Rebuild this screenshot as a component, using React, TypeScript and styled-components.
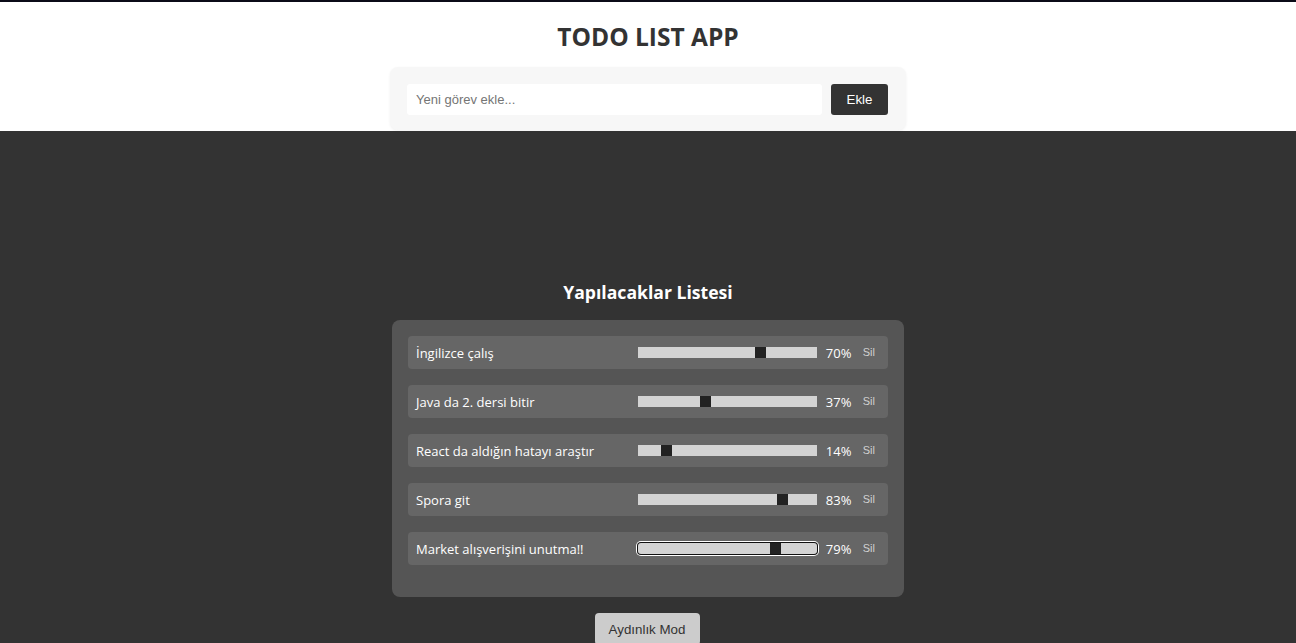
import React, { useState } from "react";
import styled, { createGlobalStyle } from "styled-components";

const GlobalStyle = createGlobalStyle`
  html, body { margin: 0; padding: 0; }
  body {
    background: #333333;
    font-family: "Open Sans", "Noto Sans", sans-serif;
    border-top: 2px solid #0b0b18;
  }
`;

const Header = styled.header`
  background: #ffffff;
  display: flex;
  flex-direction: column;
  align-items: center;
  padding-top: 19px;
`;

const Title = styled.h1`
  margin: 0 0 14px;
  font-size: 24.5px;
  line-height: 32px;
  font-weight: 700;
  color: #333333;
`;

const FormBox = styled.form`
  width: 516px;
  box-sizing: border-box;
  padding: 17px 18px 15px 17px;
  background: #f7f7f7;
  border-radius: 8px;
  box-shadow: 0 1px 3px rgba(0, 0, 0, 0.06);
  display: flex;
  gap: 9px;
  margin-bottom: 1px;
`;

const TextInput = styled.input`
  flex: 1;
  height: 31px;
  box-sizing: border-box;
  border: none;
  border-radius: 3px;
  background: #ffffff;
  padding: 0 9px;
  font-family: "Liberation Sans", Arial, sans-serif;
  font-size: 13px;
  color: #333;
  outline: none;
  &::placeholder { color: #757575; }
`;

const AddButton = styled.button`
  width: 57px;
  height: 31px;
  border: none;
  border-radius: 3px;
  background: #333333;
  color: #ffffff;
  font-family: "Liberation Sans", Arial, sans-serif;
  font-size: 13.33px;
`;

const Main = styled.main`
  display: flex;
  flex-direction: column;
  align-items: center;
  padding-top: 149px;
`;

const ListTitle = styled.h2`
  margin: 0 0 16px;
  font-size: 17.6px;
  line-height: 24px;
  font-weight: 700;
  color: #ffffff;
`;

const ListBox = styled.div`
  width: 512px;
  box-sizing: border-box;
  padding: 16px;
  background: #555555;
  border-radius: 8px;
`;

const Item = styled.div`
  height: 33px;
  margin-bottom: 16px;
  display: flex;
  align-items: center;
  padding: 0 5px 0 8px;
  background: #666666;
  border-radius: 4px;
  color: #ffffff;
  font-size: 13px;
`;

const ItemText = styled.span`
  flex: 1;
`;

const Track = styled.div<{ $focused?: boolean }>`
  position: relative;
  width: 179px;
  height: 11px;
  box-sizing: border-box;
  background: #d3d3d3;
  ${(p) =>
    p.$focused
      ? `box-shadow: 0 0 0 1px #111111, 0 0 0 2px #ffffff; border-radius: 3px;`
      : ""}
`;

const Thumb = styled.div`
  position: absolute;
  top: 0;
  width: 11px;
  height: 100%;
  background: #222222;
`;

const Percent = styled.span`
  margin-left: 9px;
  width: 23px;
`;

const DeleteButton = styled.button`
  margin-left: 6px;
  margin-bottom: 2px;
  padding: 0 8px;
  border: none;
  background: transparent;
  color: #d0d0d0;
  font-family: "Liberation Sans", Arial, sans-serif;
  font-size: 11px;
`;

const ModeButton = styled.button`
  margin-top: 16px;
  margin-right: 2px;
  width: 105px;
  height: 32px;
  border: none;
  border-radius: 4px;
  background: #cccccc;
  color: #333333;
  font-family: "Liberation Sans", Arial, sans-serif;
  font-size: 13.33px;
`;

const todos = [
  { text: "İngilizce çalış", value: 70 },
  { text: "Java da 2. dersi bitir", value: 37 },
  { text: "React da aldığın hatayı araştır", value: 14 },
  { text: "Spora git", value: 83 },
  { text: "Market alışverişini unutma!!", value: 79, focused: true },
];

export default function App() {
  const [value, setValue] = useState("");
  return (
    <>
      <GlobalStyle />
      <Header>
        <Title>TODO LIST APP</Title>
        <FormBox onSubmit={(e) => e.preventDefault()}>
          <TextInput
            placeholder="Yeni görev ekle..."
            value={value}
            onChange={(e) => setValue(e.target.value)}
          />
          <AddButton type="submit">Ekle</AddButton>
        </FormBox>
      </Header>
      <Main>
        <ListTitle>Yapılacaklar Listesi</ListTitle>
        <ListBox>
          {todos.map((t) => (
            <Item key={t.text}>
              <ItemText>{t.text}</ItemText>
              <Track $focused={t.focused}>
                <Thumb style={{ left: `${((179 - 11) * t.value) / 100}px` }} />
              </Track>
              <Percent>{t.value}%</Percent>
              <DeleteButton>Sil</DeleteButton>
            </Item>
          ))}
        </ListBox>
        <ModeButton>Aydınlık Mod</ModeButton>
      </Main>
    </>
  );
}
